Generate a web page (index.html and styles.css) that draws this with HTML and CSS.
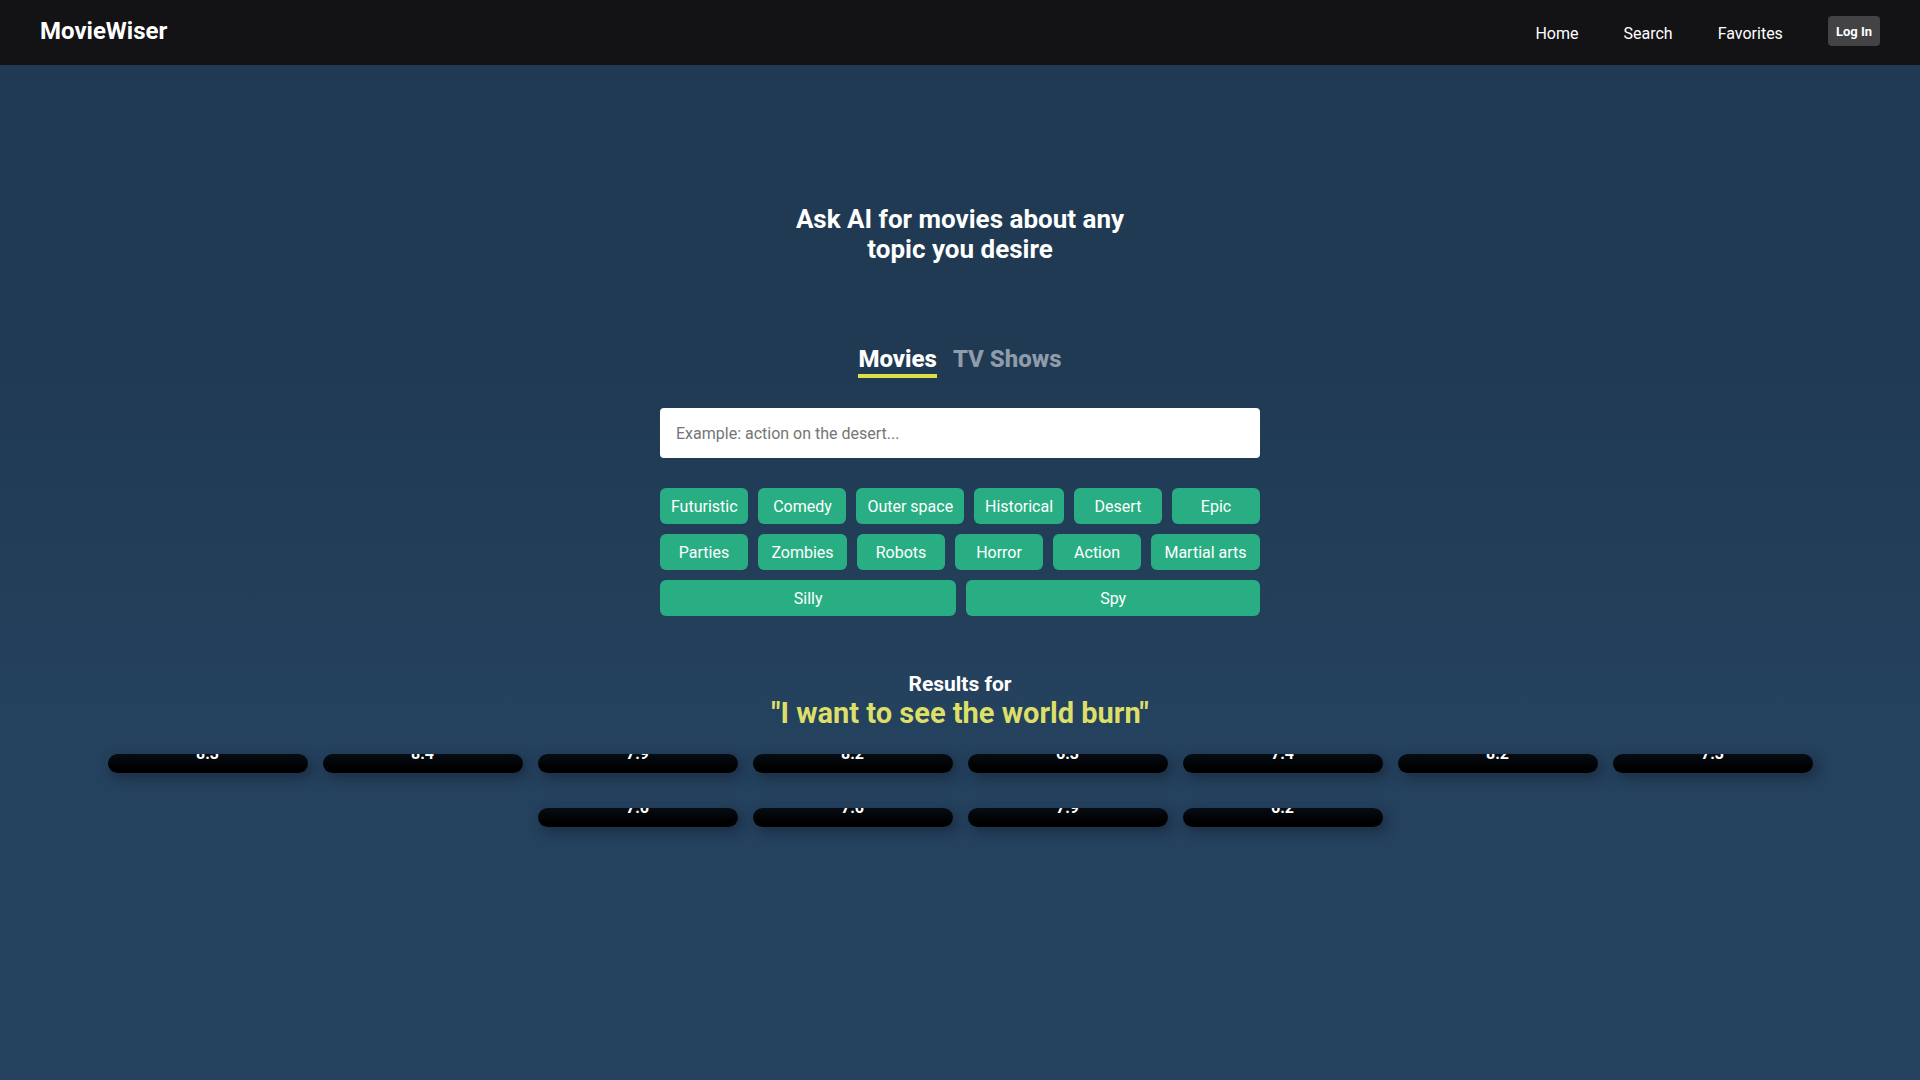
FILE: index.html
```html
<!DOCTYPE html>
<html lang="en">
<head>
<meta charset="utf-8">
<meta name="viewport" content="width=device-width, initial-scale=1">
<title>MovieWiser</title>
<link rel="stylesheet" href="styles.css">
</head>
<body>
<header class="header">
  <a class="logo" href="#">MovieWiser</a>
  <nav class="nav">
    <a href="#">Home</a>
    <a href="#">Search</a>
    <a href="#">Favorites</a>
    <button class="login" type="button">Log In</button>
  </nav>
</header>
<main class="main">
  <h1 class="title">Ask AI for movies about any topic you desire</h1>
  <div class="tabs">
    <button class="tab tab-active" type="button">Movies</button>
    <button class="tab" type="button">TV Shows</button>
  </div>
  <form class="search">
    <input class="search-input" type="text" aria-label="Topic" placeholder="Example: action on the desert...">
    <div class="topics">
      <button class="topic" type="button">Futuristic</button>
      <button class="topic" type="button">Comedy</button>
      <button class="topic" type="button">Outer space</button>
      <button class="topic" type="button">Historical</button>
      <button class="topic" type="button">Desert</button>
      <button class="topic" type="button">Epic</button>
      <button class="topic" type="button">Parties</button>
      <button class="topic" type="button">Zombies</button>
      <button class="topic" type="button">Robots</button>
      <button class="topic" type="button">Horror</button>
      <button class="topic" type="button">Action</button>
      <button class="topic" type="button">Martial arts</button>
      <button class="topic" type="button">Silly</button>
      <button class="topic" type="button">Spy</button>
    </div>
  </form>
  <h2 class="results-title">Results for <span class="query">"I want to see the world burn"</span></h2>
  <ul class="cards">
    <li class="card">8.3</li>
    <li class="card">8.4</li>
    <li class="card">7.9</li>
    <li class="card">8.2</li>
    <li class="card">6.3</li>
    <li class="card">7.4</li>
    <li class="card">8.2</li>
    <li class="card">7.3</li>
    <li class="card">7.6</li>
    <li class="card">7.6</li>
    <li class="card">7.9</li>
    <li class="card">6.2</li>
  </ul>
</main>
</body>
</html>
```
FILE: styles.css
```css
* {
  box-sizing: border-box;
}

body {
  margin: 0;
  min-height: 100vh;
  font-family: Roboto, "Liberation Sans", sans-serif;
  font-size: 16px;
  color: #fff;
  background: linear-gradient(#203a53 35%, #24415d 65%);
}

button,
input {
  font-family: inherit;
  border: 0;
}

button {
  color: inherit;
  cursor: pointer;
}

.header {
  display: flex;
  justify-content: space-between;
  align-items: flex-start;
  height: 65px;
  padding: 16px 40px;
  background: #131315;
}

.logo {
  font-size: 24px;
  line-height: 30px;
  font-weight: 700;
  color: inherit;
  text-decoration: none;
}

.nav {
  display: flex;
  align-items: flex-start;
  gap: 45px;
}

.nav a {
  line-height: 36px;
  color: inherit;
  text-decoration: none;
}

.login {
  height: 30px;
  padding: 0 8px;
  font-size: 13px;
  font-weight: 700;
  border-radius: 4px;
  background: #434345;
}

.main {
  display: flex;
  flex-direction: column;
  align-items: center;
  padding: 139px 80px 40px;
}

.title {
  max-width: 350px;
  margin: 0 0 76px;
  font-size: 26px;
  line-height: 30px;
  font-weight: 700;
  text-align: center;
}

.tabs {
  display: flex;
  gap: 16px;
  margin-bottom: 30px;
}

.tab {
  padding: 4px 0 0;
  font-size: 24px;
  line-height: 30px;
  font-weight: 800;
  color: #8f9caa;
  background: none;
  border-bottom: 4px solid transparent;
}

.tab-active {
  color: #fff;
  border-color: #dde04b;
}

.search {
  width: 100%;
  max-width: 600px;
}

.search-input {
  display: block;
  width: 100%;
  height: 50px;
  margin-bottom: 30px;
  padding: 0 16px;
  font-size: 16px;
  border-radius: 4px;
}

.search-input::placeholder {
  color: #757575;
}

.topics {
  display: flex;
  flex-wrap: wrap;
  gap: 10px;
}

.topic {
  flex: 1 0 auto;
  min-width: 88px;
  height: 36px;
  padding: 0 10px;
  font-size: 16px;
  border-radius: 6px;
  background: #29ae84;
}

.results-title {
  margin: 54px 0 26px;
  font-size: 21px;
  line-height: 28px;
  font-weight: 700;
  text-align: center;
}

.query {
  display: block;
  font-size: 29px;
  line-height: 30px;
  color: #dcdf68;
}

.cards {
  display: flex;
  flex-wrap: wrap;
  justify-content: center;
  gap: 35px 15px;
  width: 100%;
  margin: 0;
  padding: 0;
  list-style: none;
}

.card {
  display: flex;
  justify-content: center;
  align-items: flex-end;
  width: 200px;
  height: 19px;
  padding-bottom: 10px;
  overflow: hidden;
  font-weight: 700;
  line-height: 19px;
  border-radius: 10px;
  background: linear-gradient(#060d14, #000 70%);
  box-shadow: 4px 4px 12px rgba(22, 30, 48, 0.6);
}
```
